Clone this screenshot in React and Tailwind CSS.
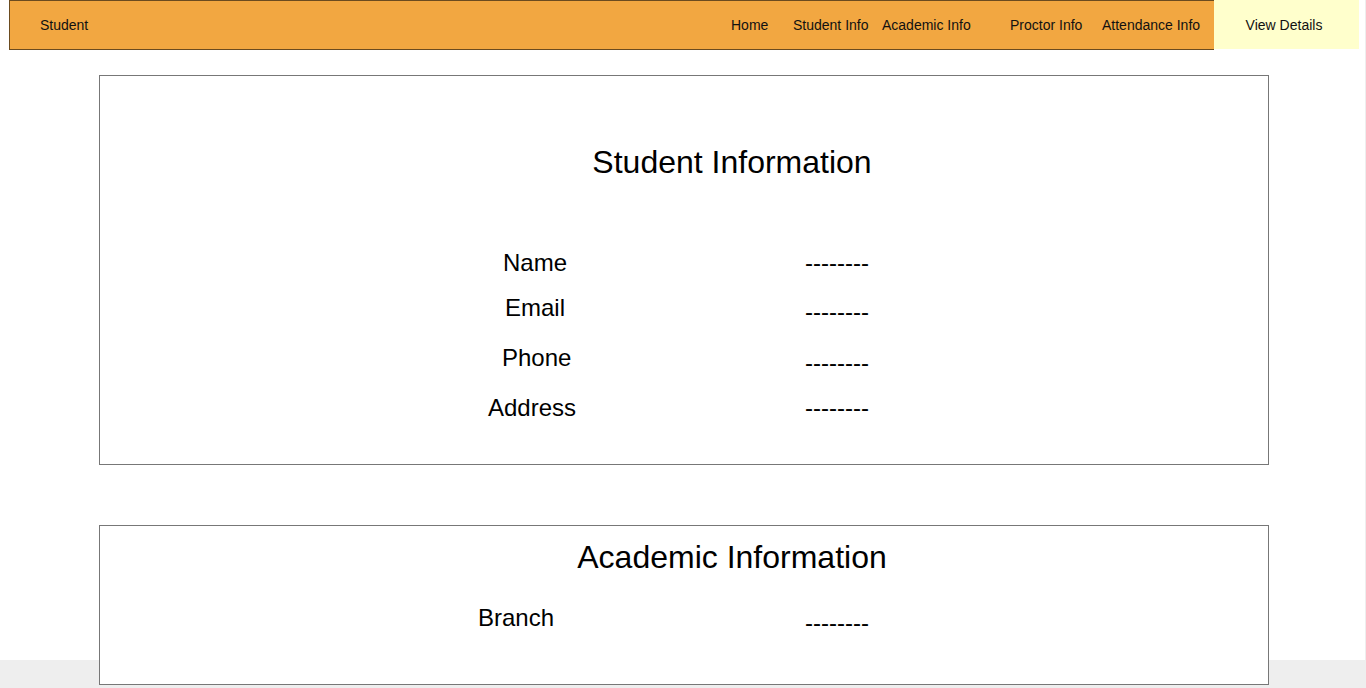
import React from "react";

const font = { fontFamily: '"Liberation Sans", Arial, sans-serif' };

export default function App() {
  return (
    <div className="min-h-screen bg-[#eeeeee]" style={font}>
      <div className="w-[1365px] h-[660px] bg-white">
        <div className="flex">
          <div className="ml-[9px] w-[1205px] h-[50px] border border-r-0 border-[#6b4b1f] bg-[#f2a741] flex items-center text-[14px] text-[#111111]">
            <div className="pl-[30px] w-[721px]">Student</div>
            <div className="w-[62px]">Home</div>
            <div className="w-[89px]">Student Info</div>
            <div className="w-[128px]">Academic Info</div>
            <div className="w-[92px]">Proctor Info</div>
            <div>Attendance Info</div>
          </div>
          <div className="w-[145px] h-[49px] pt-[2px] bg-[#ffffcc] flex items-center justify-center text-[14px] text-[#111111]">
            <span className="mr-[5px]">View Details</span>
          </div>
        </div>

        <div className="ml-[99px] mt-[25px] w-[1170px] h-[390px] border border-[#777777]">
          <div className="pt-[68px] pl-[96px] text-center text-[32px] leading-[36px] text-black">
            Student Information
          </div>
          <div className="mt-[69px] w-[1168px]">
            <div className="flex items-start h-[45px]">
              <div className="ml-[403px] w-[302px] text-[24px] leading-[28px]">Name</div>
              <div className="text-[24px] leading-[28px]">--------</div>
            </div>
            <div className="flex items-start h-[50px]">
              <div className="ml-[405px] w-[300px] text-[24px] leading-[28px]">Email</div>
              <div className="mt-[4px] text-[24px] leading-[28px]">--------</div>
            </div>
            <div className="flex items-start h-[50px]">
              <div className="ml-[402px] w-[303px] text-[24px] leading-[28px]">Phone</div>
              <div className="mt-[5px] text-[24px] leading-[28px]">--------</div>
            </div>
            <div className="flex items-start h-[30px]">
              <div className="ml-[388px] w-[317px] text-[24px] leading-[28px]">Address</div>
              <div className="text-[24px] leading-[28px]">--------</div>
            </div>
          </div>
        </div>

        <div className="ml-[99px] mt-[60px] w-[1170px] h-[160px] border border-[#777777] bg-white">
          <div className="pt-[13px] pl-[96px] text-center text-[32px] leading-[36px] text-black">
            Academic Information
          </div>
          <div className="mt-[29px] flex items-start">
            <div className="ml-[378px] w-[327px] text-[24px] leading-[28px]">Branch</div>
            <div className="mt-[5px] text-[24px] leading-[28px]">--------</div>
          </div>
        </div>
      </div>
    </div>
  );
}
